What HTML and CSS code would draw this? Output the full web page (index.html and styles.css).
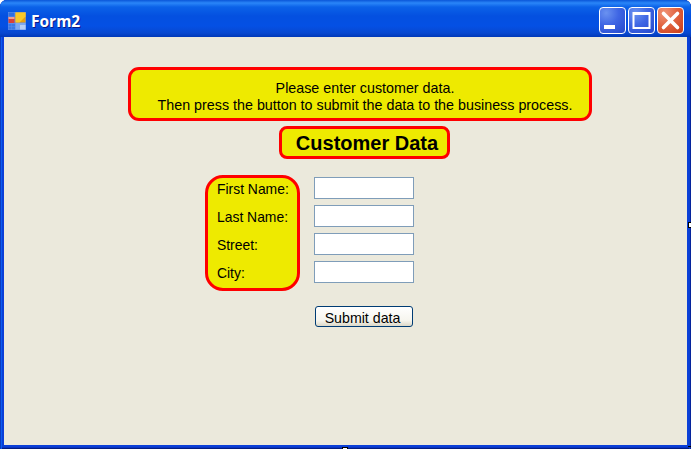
FILE: index.html
```html
<!DOCTYPE html>
<html lang="en">
<head>
<meta charset="utf-8">
<title>Form2</title>
<link rel="stylesheet" href="styles.css">
</head>
<body>
<div class="window">
  <header class="titlebar">
    <svg class="app-icon" width="18" height="18" viewBox="0 0 18 18" aria-hidden="true">
      <rect x="0" y="0" width="18" height="18" fill="#fff" fill-opacity="0.35"/>
      <rect x="0.5" y="0.5" width="6" height="4" fill="#2f6fe0"/>
      <rect x="0.5" y="5" width="6" height="6" fill="#d8403a"/>
      <rect x="0.5" y="5" width="6" height="2" fill="#f0a090"/>
      <rect x="0.5" y="12" width="3" height="2.5" fill="#3a78e6"/>
      <rect x="4" y="12" width="3" height="2.5" fill="#3a78e6"/>
      <rect x="0.5" y="15" width="3" height="2.5" fill="#3a78e6"/>
      <rect x="4" y="15" width="3" height="2.5" fill="#3a78e6"/>
      <rect x="7.5" y="0.5" width="10" height="10" fill="#e8a010"/>
      <path d="M7.5 0.5h10v4l-6 6h-4z" fill="#f8c828"/>
      <rect x="7.5" y="11" width="10" height="6.5" fill="#7ea8f0"/>
      <rect x="12" y="13" width="5.5" height="4.5" fill="#b6cef6"/>
    </svg>
    <span class="title">Form2</span>
    <div class="controls">
      <div class="ctl ctl-blue">
        <svg width="27" height="27" viewBox="0 0 27 27" aria-hidden="true"><rect x="5" y="18" width="11" height="4" fill="#fff"/></svg>
      </div>
      <div class="ctl ctl-blue">
        <svg width="27" height="27" viewBox="0 0 27 27" aria-hidden="true"><rect x="5.5" y="6" width="16" height="15" fill="none" stroke="#fff" stroke-width="2"/><rect x="5" y="5" width="17" height="3" fill="#fff"/></svg>
      </div>
      <div class="ctl ctl-red">
        <svg width="27" height="27" viewBox="0 0 27 27" aria-hidden="true"><path d="M6.5 6.5L20.5 20.5M20.5 6.5L6.5 20.5" stroke="#fff" stroke-width="3.6" stroke-linecap="round"/></svg>
      </div>
    </div>
  </header>
  <main class="client">
    <div class="notice">Please enter customer data.<br>Then press the button to submit the data to the business process.</div>
    <h1 class="heading">Customer Data</h1>
    <form class="form">
      <div class="labels">
        <label class="label">First Name:</label>
        <label class="label">Last Name:</label>
        <label class="label">Street:</label>
        <label class="label">City:</label>
      </div>
      <div class="fields">
        <input class="field" type="text">
        <input class="field" type="text">
        <input class="field" type="text">
        <input class="field" type="text">
      </div>
    </form>
    <button class="submit" type="button">Submit data</button>
  </main>
  <span class="handle handle-right"></span>
  <span class="handle handle-bottom"></span>
  <span class="handle handle-corner"></span>
</div>
</body>
</html>
```

FILE: styles.css
```css
* { box-sizing: border-box; }
html, body { margin: 0; padding: 0; background: #fff; }
body { overflow: hidden; }

.window {
  position: relative;
  display: flex;
  flex-direction: column;
  width: 691px;
  height: 449px;
  padding: 0 4px 4px;
  border-radius: 7px 7px 0 0;
  background: #0a3fd8;
  box-shadow: inset 1px 0 #0b3bc0, inset 2px 0 #0b5cf0, inset -1px 0 #06249c, inset -2px 0 #0a40d0, inset 0 -1px #041d80, inset 0 -2px #0833c0;
  font-family: "Liberation Sans", Arial, sans-serif;
  font-size: 14.3px;
  color: #000;
}

.titlebar {
  display: flex;
  align-items: center;
  height: 37px;
  margin: 0 -4px;
  padding: 4px 7px 0 8px;
  border-radius: 7px 7px 0 0;
  background: linear-gradient(180deg, #0a56d8 0, #2a86f8 3px, #0b62e8 7px, #0450e0 16px, #0450e4 26px, #0848d0 33px, #0038b8 37px);
}
.app-icon { flex: none; }
.title {
  margin-left: 5px;
  font-family: "Open Sans", sans-serif;
  font-size: 15.5px;
  font-weight: 700;
  color: #fff;
  text-shadow: 1px 1px #0c1a88;
}
.controls { display: flex; gap: 2px; margin-left: auto; }
.ctl {
  width: 27px;
  height: 27px;
  border: 1px solid #fff;
  border-radius: 4px;
  overflow: hidden;
}
.ctl svg { display: block; margin: -1px; }
.ctl-blue { background: radial-gradient(circle at 25% 20%, #6a92f0 0, #3f66e4 45%, #2448cc 100%); }
.ctl-red { background: radial-gradient(circle at 25% 20%, #f09478 0, #e0603c 50%, #c83c18 100%); }

.client {
  flex: 1;
  display: flex;
  flex-direction: column;
  align-items: flex-start;
  padding-top: 30px;
  background: #ebe9dc;
}

.notice,
.heading,
.labels {
  border: 3px solid #ff0000;
  background: #eeea00;
}
.notice {
  width: 464px;
  height: 54px;
  margin-left: 124px;
  padding: 10px 0 0 10px;
  border-radius: 11px;
  line-height: 17px;
  text-align: center;
}
.heading {
  width: 171px;
  height: 33px;
  margin: 5px 0 0 275px;
  padding: 1px 0 0 5px;
  border-radius: 8px;
  font-size: 20px;
  font-weight: 700;
  line-height: 27px;
  text-align: center;
}
.form {
  display: flex;
  align-items: flex-start;
  gap: 14px;
  margin: 16px 0 0 201px;
}
.labels {
  display: flex;
  flex-direction: column;
  gap: 6px;
  width: 95px;
  height: 116px;
  padding: 0 0 0 9px;
  border-radius: 18px;
  font-size: 13.9px;
}
.label { height: 22px; line-height: 22px; white-space: nowrap; }
.fields {
  display: flex;
  flex-direction: column;
  gap: 6px;
  padding-top: 2px;
}
.field {
  display: block;
  width: 100px;
  height: 22px;
  margin: 0;
  padding: 0 3px;
  border: 1px solid #7f9db9;
  border-radius: 0;
  background: #fff;
  outline: none;
}
.submit {
  width: 98px;
  height: 21px;
  margin: 15px 0 0 311px;
  padding: 2px 3px 0 0;
  border: 1px solid #003c74;
  border-radius: 3px;
  background: linear-gradient(180deg, #fff 0, #f6f5ee 70%, #dcd8c8 100%);
  font: 14.2px "Liberation Sans", Arial, sans-serif;
  color: #000;
}

.handle {
  position: absolute;
  width: 6px;
  height: 6px;
  border: 1px solid #000;
  background: #fff;
}
.handle-right { left: 688px; top: 222px; }
.handle-bottom { left: 342px; top: 447px; }
.handle-corner { left: 688px; top: 446px; width: 3px; height: 1px; border: 0; background: #000; }
```
